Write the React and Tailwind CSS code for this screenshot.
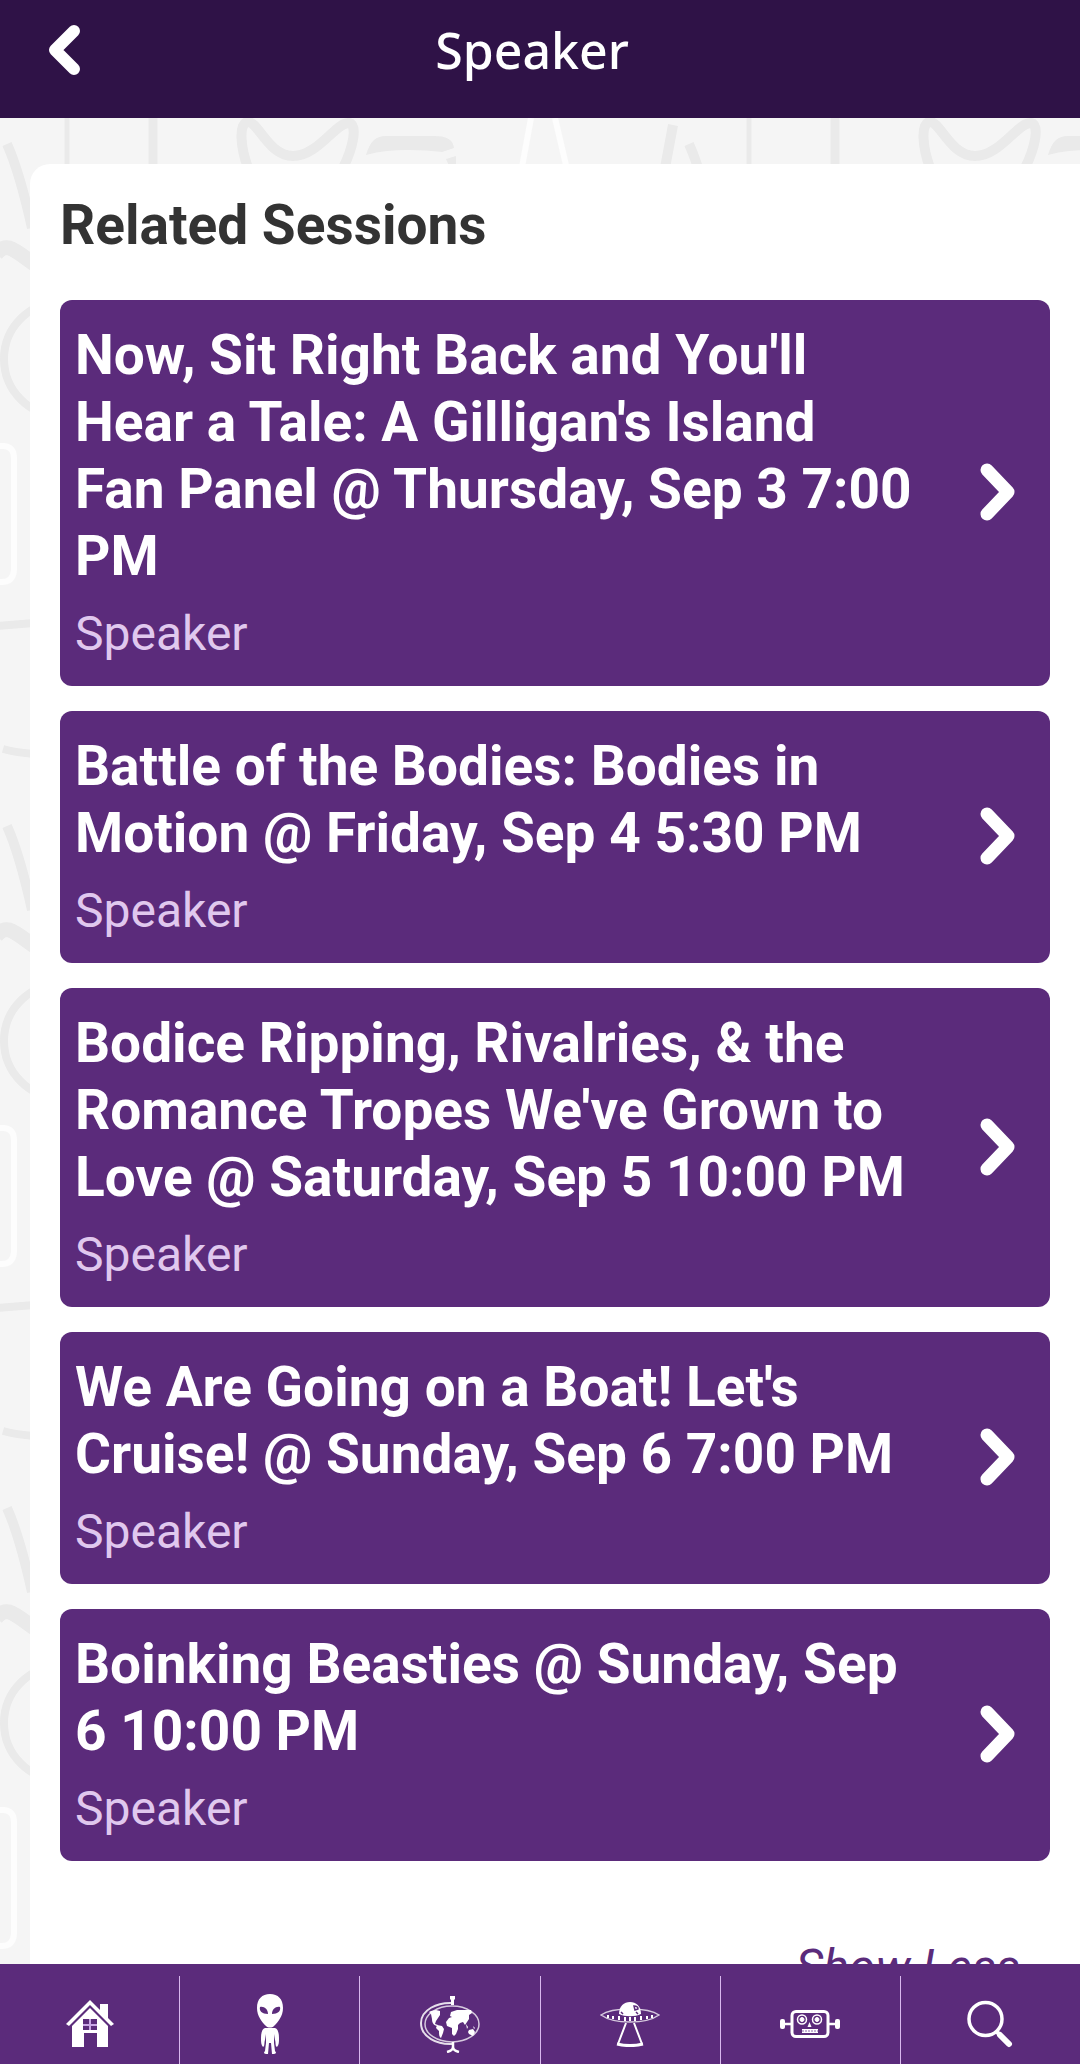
import React from 'react';

const SESSIONS = [
    { id: 1, title: "Now, Sit Right Back and You'll Hear a Tale: A Gilligan's Island Fan Panel @ Thursday, Sep 3 7:00 PM", role: 'Speaker' },
    { id: 2, title: 'Battle of the Bodies: Bodies in Motion @ Friday, Sep 4 5:30 PM', role: 'Speaker' },
    { id: 3, title: "Bodice Ripping, Rivalries, & the Romance Tropes We've Grown to Love @ Saturday, Sep 5 10:00 PM", role: 'Speaker' },
    { id: 4, title: "We Are Going on a Boat! Let's Cruise! @ Sunday, Sep 6 7:00 PM", role: 'Speaker' },
    { id: 5, title: 'Boinking Beasties @ Sunday, Sep 6 10:00 PM', role: 'Speaker' },
];

const HomeIcon = () => (
    <svg viewBox="0 0 48 48" className="w-12 h-12" fill="#fff" aria-hidden="true">
        <path d="M34 4h8v15l-8-8z" />
        <path d="M24 0 L48 24 L45 26 L24 5 L3 26 L0 24 Z" />
        <path fillRule="evenodd" d="M24 8 L42 26 V47 H31 V33 H18 V47 H6 V26 Z M17 19h14v11H17z" />
        <path d="M24 19v11M17 25h14" stroke="#c9a6e6" strokeWidth="2" />
    </svg>
);

const AlienIcon = () => (
    <svg viewBox="0 0 28 61" className="w-7 h-[61px]" fill="#fff" aria-hidden="true">
        <path fillRule="evenodd" d="M14 0c8 0 13 5 13 14 0 8-5 14-9 18-2 2-6 2-8 0C6 28 1 22 1 14 1 5 6 0 14 0zM4 13c-1 4 2 7 8 7 0-5-4-8-8-7zM24 13c-4-1-8 2-8 7 6 0 9-3 8-7z" />
        <path d="M9 34h10c3 1 4 5 4 10 0 4 0 7-2 9-2-1-1-4-2-7l-1-6v9l1 8c2 2 1 3-3 3l-1-11h-2l-1 11c-4 0-5-1-3-3l1-8v-9l-1 6c-1 3 0 6-2 7-2-2-2-5-2-9 0-5 1-9 4-10z" />
    </svg>
);

const GlobeIcon = () => (
    <svg viewBox="0 0 60 57" className="w-15 h-[57px]" fill="none" stroke="#fff" aria-hidden="true">
        <ellipse cx="32" cy="28" rx="27" ry="18" strokeWidth="1.5" opacity=".75" />
        <path d="M33 7C17 6 1 14 1 27c0 14 16 22 32 21" strokeWidth="2" opacity=".85" />
        <path d="M30 0h5v3l-1 1v5h-3V4l-1-1z" fill="#fff" stroke="none" />
        <path d="M33 46v5M27 56c4-1 6-3 6-5 0 2 2 4 6 5" strokeWidth="2.5" />
        <g fill="#fff" stroke="none">
            <path d="M11 15l5-1 4 1v4l-2 3-2 3-1 3 3 1-1 1c-4-1-5-4-5-7l-1-5-2-2z" />
            <path d="M17 29l5 1 2 3-1 4-2 5c-2-1-2-4-2-7l-3-3z" />
            <path d="M31 16l6-2h14l1 3-3 2v4l-2 3-2 3-2-3-3 1-2 2v4l-2 5-2 2-2-2v-6l-5-2-1-4 3-4 3-1-2-1z" />
            <path d="M46 28l2 3-1 2zM49 34l4-1 2 3-2 4-4-2-1-2zM53 30l2 2-1 1z" />
        </g>
    </svg>
);

const UfoIcon = () => (
    <svg viewBox="0 0 60 46" className="w-15 h-[46px]" fill="none" stroke="#fff" aria-hidden="true">
        <path d="M1 14C8 9 18 8 30 8s22 1 29 6c-7 5-17 7-29 7S8 19 1 14z" strokeWidth="1.5" opacity=".75" />
        <path d="M19 13c0-8 5-12 11-12s11 4 11 12c-6 3-16 3-22 0z" fill="#fff" stroke="none" />
        <path d="M34 5c2 0 4 1 4 3l-3 1zM36 11l2 2M21 11l2 2" stroke="#5b2b7b" strokeWidth="1.5" />
        <path d="M8 14v3M13 15v3M19 15v4M25 16v4M30 16v4M35 16v4M41 15v4M47 15v3M52 14v3" strokeWidth="2" />
        <path d="M26 22L18 43M34 22L42 43" strokeWidth="2" />
        <path d="M17 43c8 2 18 2 26 0" strokeWidth="3" />
    </svg>
);

const RobotIcon = () => (
    <svg viewBox="0 0 60 28" className="w-15 h-7" fill="none" stroke="#fff" aria-hidden="true">
        <rect x="12" y="1.5" width="36" height="25" rx="4" strokeWidth="3" />
        <path d="M5 14h7M48 14h7" strokeWidth="2.5" />
        <rect x="0" y="9" width="5" height="10" rx="2" fill="#fff" stroke="none" />
        <rect x="55" y="9" width="5" height="10" rx="2" fill="#fff" stroke="none" />
        <circle cx="22" cy="9.5" r="4.5" strokeWidth="1.5" />
        <circle cx="22" cy="9.5" r="2" fill="#fff" />
        <circle cx="37" cy="9.5" r="4.5" strokeWidth="1.5" />
        <circle cx="37" cy="9.5" r="2" fill="#fff" />
        <path d="M29.5 12l2 5h-4z" fill="#fff" stroke="none" />
        <path d="M22 21h16" strokeWidth="4" />
        <path d="M22 21h16" stroke="#8e63ae" strokeWidth="1" strokeDasharray="2 1" />
    </svg>
);

const SearchIcon = () => (
    <svg viewBox="0 0 46 48" className="w-[46px] h-12" fill="none" stroke="#fff" aria-hidden="true">
        <circle cx="18.5" cy="19" r="16.5" strokeWidth="3.5" />
        <path d="M30 32l3 3" strokeWidth="4" />
        <path d="M33 35l9 9" strokeWidth="6" strokeLinecap="round" />
    </svg>
);

const NAV_ITEMS = [
    { label: 'Home', Icon: HomeIcon },
    { label: 'Guests', Icon: AlienIcon },
    { label: 'Maps', Icon: GlobeIcon },
    { label: 'Schedule', Icon: UfoIcon },
    { label: 'Fan tracks', Icon: RobotIcon },
    { label: 'Search', Icon: SearchIcon },
];

// Repeating doodle wallpaper behind the content sheet
const Doodles = () => (
    <svg className="absolute inset-0 w-full h-full" aria-hidden="true">
        <defs>
            <pattern id="doodles" width="682" height="682" patternUnits="userSpaceOnUse">
                <g fill="none" stroke="#eaeaea">
                    <path d="M67 0v60" strokeWidth="5" />
                    <path d="M153 0v60" strokeWidth="9" />
                    <path d="M248 50C240 28 239 6 247 4C258 2 268 38 293 38C318 38 336 4 349 5C358 7 353 30 343 50" strokeWidth="10" />
                    <path d="M366 37c4-14 10-19 20-19h48c12 0 19 3 20 12l-12 4c-22-2-50-4-76 3z" fill="#eaeaea" stroke="none" />
                    <path d="M446 41l10-3v12h-6z" fill="#eaeaea" stroke="none" />
                    <path d="M673 7L665 50" strokeWidth="10" />
                    <path d="M7 26C16 46 24 74 32 110" strokeWidth="10" />
                    <path d="M-4 136C6 124 12 130 34 146" strokeWidth="15" />
                    <circle cx="61" cy="241" r="57" strokeWidth="8" />
                    <path d="M-4 508L34 505" strokeWidth="8" />
                    <path d="M3 631C14 634 20 635 34 636" strokeWidth="8" />
                </g>
                <g fill="none" stroke="#fdfdfd" strokeWidth="6">
                    <path d="M531 0L520 60M555 0L569 60" />
                    <path d="M-4 328H4q10 1 10 12v112q-1 12-12 12H-4" />
                </g>
            </pattern>
        </defs>
        <rect width="100%" height="100%" fill="url(#doodles)" />
    </svg>
);

const SessionCard = ({ title, role }) => (
    <a
        href="#session"
        className="flex items-center bg-[#5b2b7b] rounded-xl pt-[22px] pb-6 pl-[15px] pr-[34px] text-white"
    >
        <div className="flex-1 pr-[66px]">
            <h3 className="text-[55px] leading-[67px] font-bold">{title}</h3>
            <p className="text-5xl leading-[56px] mt-4 text-[#e0c8ee]">{role}</p>
        </div>
        <svg viewBox="0 0 36 60" className="w-9 h-15 shrink-0" aria-hidden="true">
            <path d="M7 8L28 30L7 52" stroke="#fff" strokeWidth="13" strokeLinecap="round" strokeLinejoin="round" fill="none" />
        </svg>
    </a>
);

export default function App() {
    return (
        <div className="h-screen flex flex-col bg-[#f5f5f5] font-[Roboto,sans-serif]">
            {/* Header */}
            <header className="shrink-0 h-[118px] flex items-center bg-[#2f1247] text-white pl-12 pr-24 pb-[18px]">
                <button type="button" aria-label="Back" className="w-8">
                    <svg viewBox="0 0 32 52" className="w-8 h-13" aria-hidden="true">
                        <path d="M26 7L7 26L26 45" stroke="#fff" strokeWidth="12" strokeLinecap="round" strokeLinejoin="round" fill="none" />
                    </svg>
                </button>
                <h1 className="flex-1 text-center text-[50px] leading-[68px] font-medium font-['Noto_Sans',sans-serif]">
                    Speaker
                </h1>
            </header>

            {/* Content */}
            <main className="relative flex-1 min-h-0 overflow-y-auto [scrollbar-width:none] pt-[46px] pl-[30px]">
                <Doodles />
                <section className="relative bg-white rounded-tl-[20px] px-[30px] pt-7 pb-10">
                    <h2 className="text-[55px] font-bold leading-[67px] text-[#333] mb-[41px]">
                        Related Sessions
                    </h2>
                    <div className="flex flex-col gap-[25px]">
                        {SESSIONS.map((session) => (
                            <SessionCard key={session.id} title={session.title} role={session.role} />
                        ))}
                    </div>
                    <div className="flex justify-end pt-[78px] pr-[30px]">
                        <button type="button" className="text-5xl leading-[56px] italic text-[#5b2b7b]">
                            Show Less
                        </button>
                    </div>
                </section>
            </main>

            {/* Bottom tabs */}
            <nav className="shrink-0 h-[100px] flex bg-[#5b2b7b] pt-3">
                {NAV_ITEMS.map(({ label, Icon }) => (
                    <a
                        key={label}
                        href="#nav"
                        aria-label={label}
                        className="flex-1 flex items-center justify-center pt-2 border-r border-[#d9b8ee] last:border-r-0"
                    >
                        <Icon />
                    </a>
                ))}
            </nav>
        </div>
    );
}
